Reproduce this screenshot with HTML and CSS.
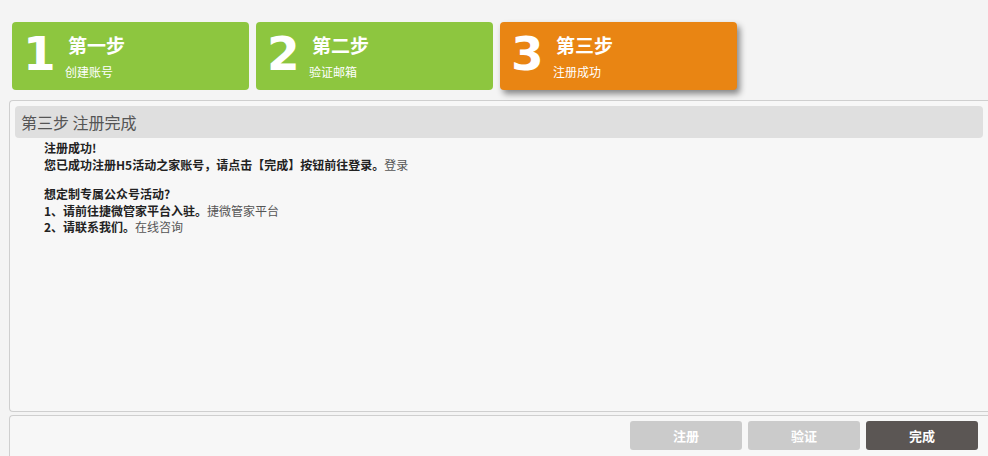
FILE: index.html
```html
<!DOCTYPE html>
<html lang="zh">
<head>
<meta charset="utf-8">
<link rel="stylesheet" href="styles.css">
</head>
<body>
<div class="steps">
  <div class="step done">
    <div class="num">1</div>
    <div class="info"><div class="title">第一步</div><div class="sub">创建账号</div></div>
  </div>
  <div class="step done">
    <div class="num">2</div>
    <div class="info"><div class="title">第二步</div><div class="sub">验证邮箱</div></div>
  </div>
  <div class="step active">
    <div class="num">3</div>
    <div class="info"><div class="title">第三步</div><div class="sub">注册成功</div></div>
  </div>
</div>
<div class="panel">
  <div class="panel-head">第三步 注册完成</div>
  <div class="content">
    <p>注册成功!<br>您已成功注册H5活动之家账号，请点击【完成】按钮前往登录。<a class="link">登录</a></p>
    <p>想定制专属公众号活动?<br>1、请前往捷微管家平台入驻。<a class="link">捷微管家平台</a><br>2、请联系我们。<a class="link">在线咨询</a></p>
  </div>
</div>
<div class="footer">
  <button class="btn">注册</button>
  <button class="btn">验证</button>
  <button class="btn primary">完成</button>
</div>
</body>
</html>
```
FILE: styles.css
```css
html, body { margin: 0; padding: 0; }
body {
  background: #f4f4f4;
  font-family: "Noto Sans CJK SC", "Open Sans", sans-serif;
  width: 988px;
  height: 456px;
  overflow: hidden;
}
.steps {
  display: flex;
  gap: 7px;
  padding: 22px 0 0 12px;
  height: 68px;
}
.step {
  width: 237px;
  height: 68px;
  border-radius: 4px;
  display: flex;
  color: #fff;
  box-sizing: border-box;
  padding-left: 11px;
}
.step.done { background: #8dc63f; }
.step.active { background: #e98513; box-shadow: 3px 4px 6px rgba(0,0,0,0.45); }
.num {
  font-family: "DejaVu Sans", sans-serif;
  font-weight: 700;
  font-size: 47px;
  line-height: 64px;
  width: 35px;
  text-align: left;
}
.info { padding-top: 10px; }
.title {
  font-weight: 700;
  font-size: 19px;
  line-height: 26px;
  padding-left: 10px;
}
.sub {
  font-size: 12px;
  line-height: 16px;
  margin-top: 6px;
  padding-left: 7px;
}
.panel {
  margin: 10px 0 0 9px;
  height: 312px;
  border: 1px solid #cfcfcf;
  border-right: none;
  border-radius: 4px 0 0 4px;
  background: #f7f7f7;
  box-sizing: border-box;
  padding: 5px 5px 0 5px;
}
.panel-head {
  background: #dfdfdf;
  border-radius: 4px;
  height: 32px;
  line-height: 32px;
  padding-left: 6px;
  font-size: 16px;
  color: #555;
}
.content {
  padding: 2px 0 0 29px;
  font-size: 12px;
  line-height: 16.5px;
  color: #222;
  font-weight: 700;
}
.content p { margin: 0 0 13px 0; }
.link { font-weight: 400; color: #555; }
.footer {
  margin: 3px 0 0 9px;
  height: 50px;
  border: 1px solid #cfcfcf;
  border-right: none;
  border-radius: 4px 0 0 4px;
  background: #f7f7f7;
  box-sizing: border-box;
  display: flex;
  justify-content: flex-end;
  align-items: flex-start;
  gap: 6px;
  padding: 5px 10px 0 0;
}
.btn {
  width: 112px;
  height: 29px;
  border: none;
  border-radius: 3px;
  background: #cbcbcb;
  color: #fff;
  font-family: "Noto Sans CJK SC", sans-serif;
  font-weight: 700;
  font-size: 13px;
  padding: 0;
}
.btn.primary { background: #5b5654; }
```
